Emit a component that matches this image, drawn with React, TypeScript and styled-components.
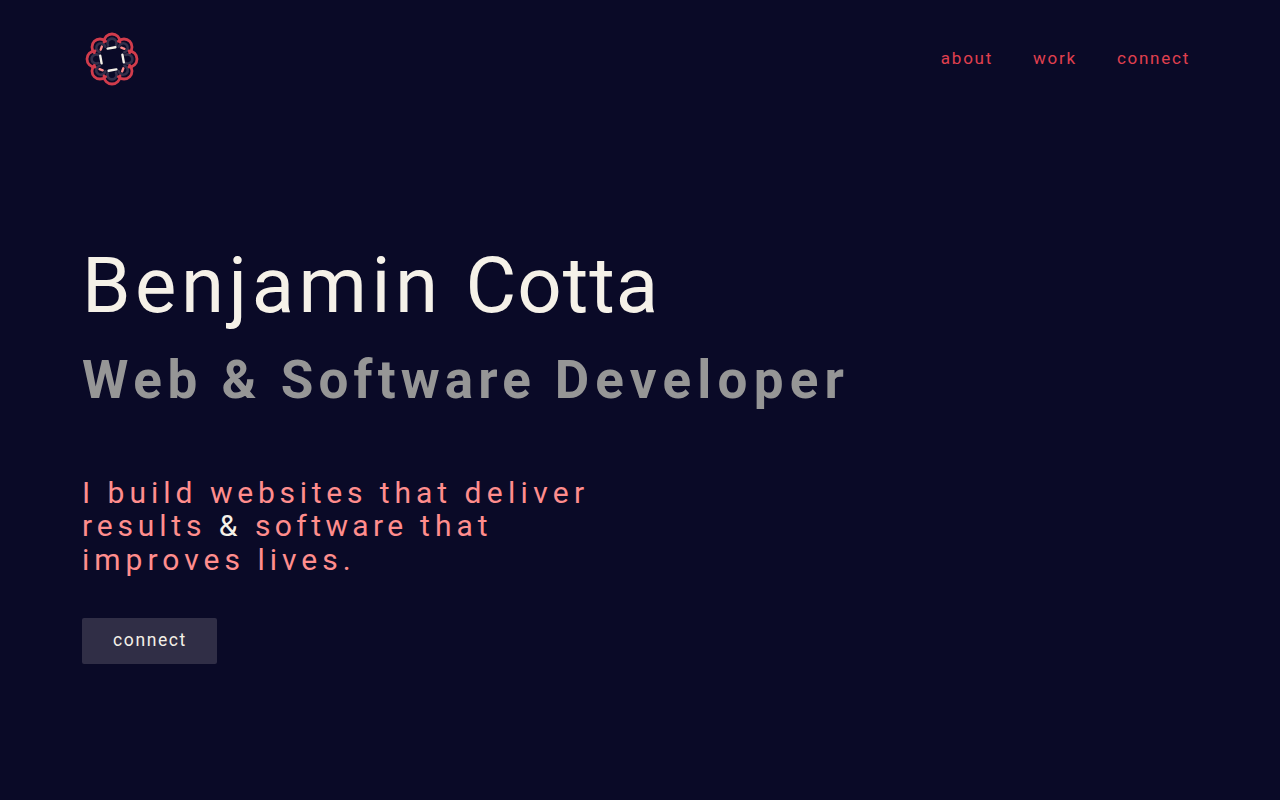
import React from "react";
import styled, { createGlobalStyle } from "styled-components";

const Global = createGlobalStyle`
  html, body { margin: 0; padding: 0; background: #0a0a27; }
  body { font-family: Roboto, "Liberation Sans", sans-serif; overflow: hidden; }
`;
const Page = styled.div`
  width: 1280px; height: 800px; background: #0a0a27; box-sizing: border-box;
  padding: 32px 90px 0 82px; display: flex; flex-direction: column;
`;
const Header = styled.header`
  display: flex; justify-content: space-between; align-items: center; height: 54px;
`;
const LogoBox = styled.a`display: block; width: 60px; height: 54px; flex: none;`;
const Nav = styled.nav`display: flex; gap: 40px;`;
const NavLink = styled.a`
  color: #e0404f; font-size: 17px; letter-spacing: 1.75px; line-height: 52px; height: 54px; font-weight: 400;
`;
const Hero = styled.main`padding-top: 155px; display: flex; flex-direction: column; align-items: flex-start;`;
const Title = styled.h1`
  margin: 0; color: #f5f1e8; font-size: 78px; line-height: 90px; font-weight: 400; letter-spacing: 4.5px; word-spacing: -1px;
`;
const Subtitle = styled.h2`
  margin: 18px 0 0; color: #969696; font-size: 53px; line-height: 62px; font-weight: 700; letter-spacing: 5.6px;
`;
const Pitch = styled.p`
  margin: 64.8px 0 0; width: 560px; color: #ff8d8d; font-size: 30px; line-height: 33.5px; font-weight: 400; letter-spacing: 5px;
`;
const Word = styled.span<{ $ls: number }>`letter-spacing: ${(p) => p.$ls}px;`;
const Amp = styled.span`color: #f5f1e8;`;
const Cta = styled.a`
  margin-top: 41.7px; width: 135px; height: 46px; box-sizing: border-box; padding: 0 0 2px 1px; background: #302e46; border-radius: 2px;
  display: flex; align-items: center; justify-content: center;
  color: #f5f1e8; font-size: 17.5px; letter-spacing: 1.6px;
`;

const angles = [0, 45, 90, 135, 180, 225, 270, 315];
const Logo = () => (
  <svg width="60" height="54" viewBox="0 0 60 54" fill="none">
    <g transform="translate(30 27)">
      {angles.map((a) => (
        <g key={a} transform={`rotate(${a})`}>
          <path d="M-4 -13.5 A 4.6 4.6 0 1 1 4 -13.5" stroke="#32304a" strokeWidth="2.6" strokeLinecap="round" />
        </g>
      ))}
      {angles.map((a) => (
        <g key={a} transform={`rotate(${a})`}>
          <path d="M-8 -17 A 8 8 0 0 1 8 -17" stroke="#d13c4c" strokeWidth="2.8" strokeLinecap="round" />
        </g>
      ))}
      {angles.map((a) => (
        <g key={a} transform={`rotate(${a})`}>
          {a % 90 === 0 ? (
            <path d="M-4.4 -10.4 L3.4 -11.8" stroke="#f5f1e8" strokeWidth="2.4" strokeLinecap="round" />
          ) : (
            <path d="M-1.4 -14.6 L1.6 -16" stroke="#ff8a8a" strokeWidth="2.4" strokeLinecap="round" />
          )}
        </g>
      ))}
    </g>
  </svg>
);

export default function App() {
  return (
    <Page>
      <Global />
      <Header>
        <LogoBox><Logo /></LogoBox>
        <Nav>
          <NavLink>about</NavLink>
          <NavLink>work</NavLink>
          <NavLink>connect</NavLink>
        </Nav>
      </Header>
      <Hero>
        <Title>Benjamin <Word $ls={1}>Cotta</Word></Title>
        <Subtitle>Web &amp; <Word $ls={5.1}>Software</Word> <Word $ls={6.2}>Developer</Word></Subtitle>
        <Pitch>I build <Word $ls={4.75}>websites</Word> that <Word $ls={5.3}>deliver</Word> <Word $ls={4.85}>results</Word> <Amp>&amp;</Amp> <Word $ls={4.4}>software</Word> that improves lives.</Pitch>
        <Cta>connect</Cta>
      </Hero>
    </Page>
  );
}
